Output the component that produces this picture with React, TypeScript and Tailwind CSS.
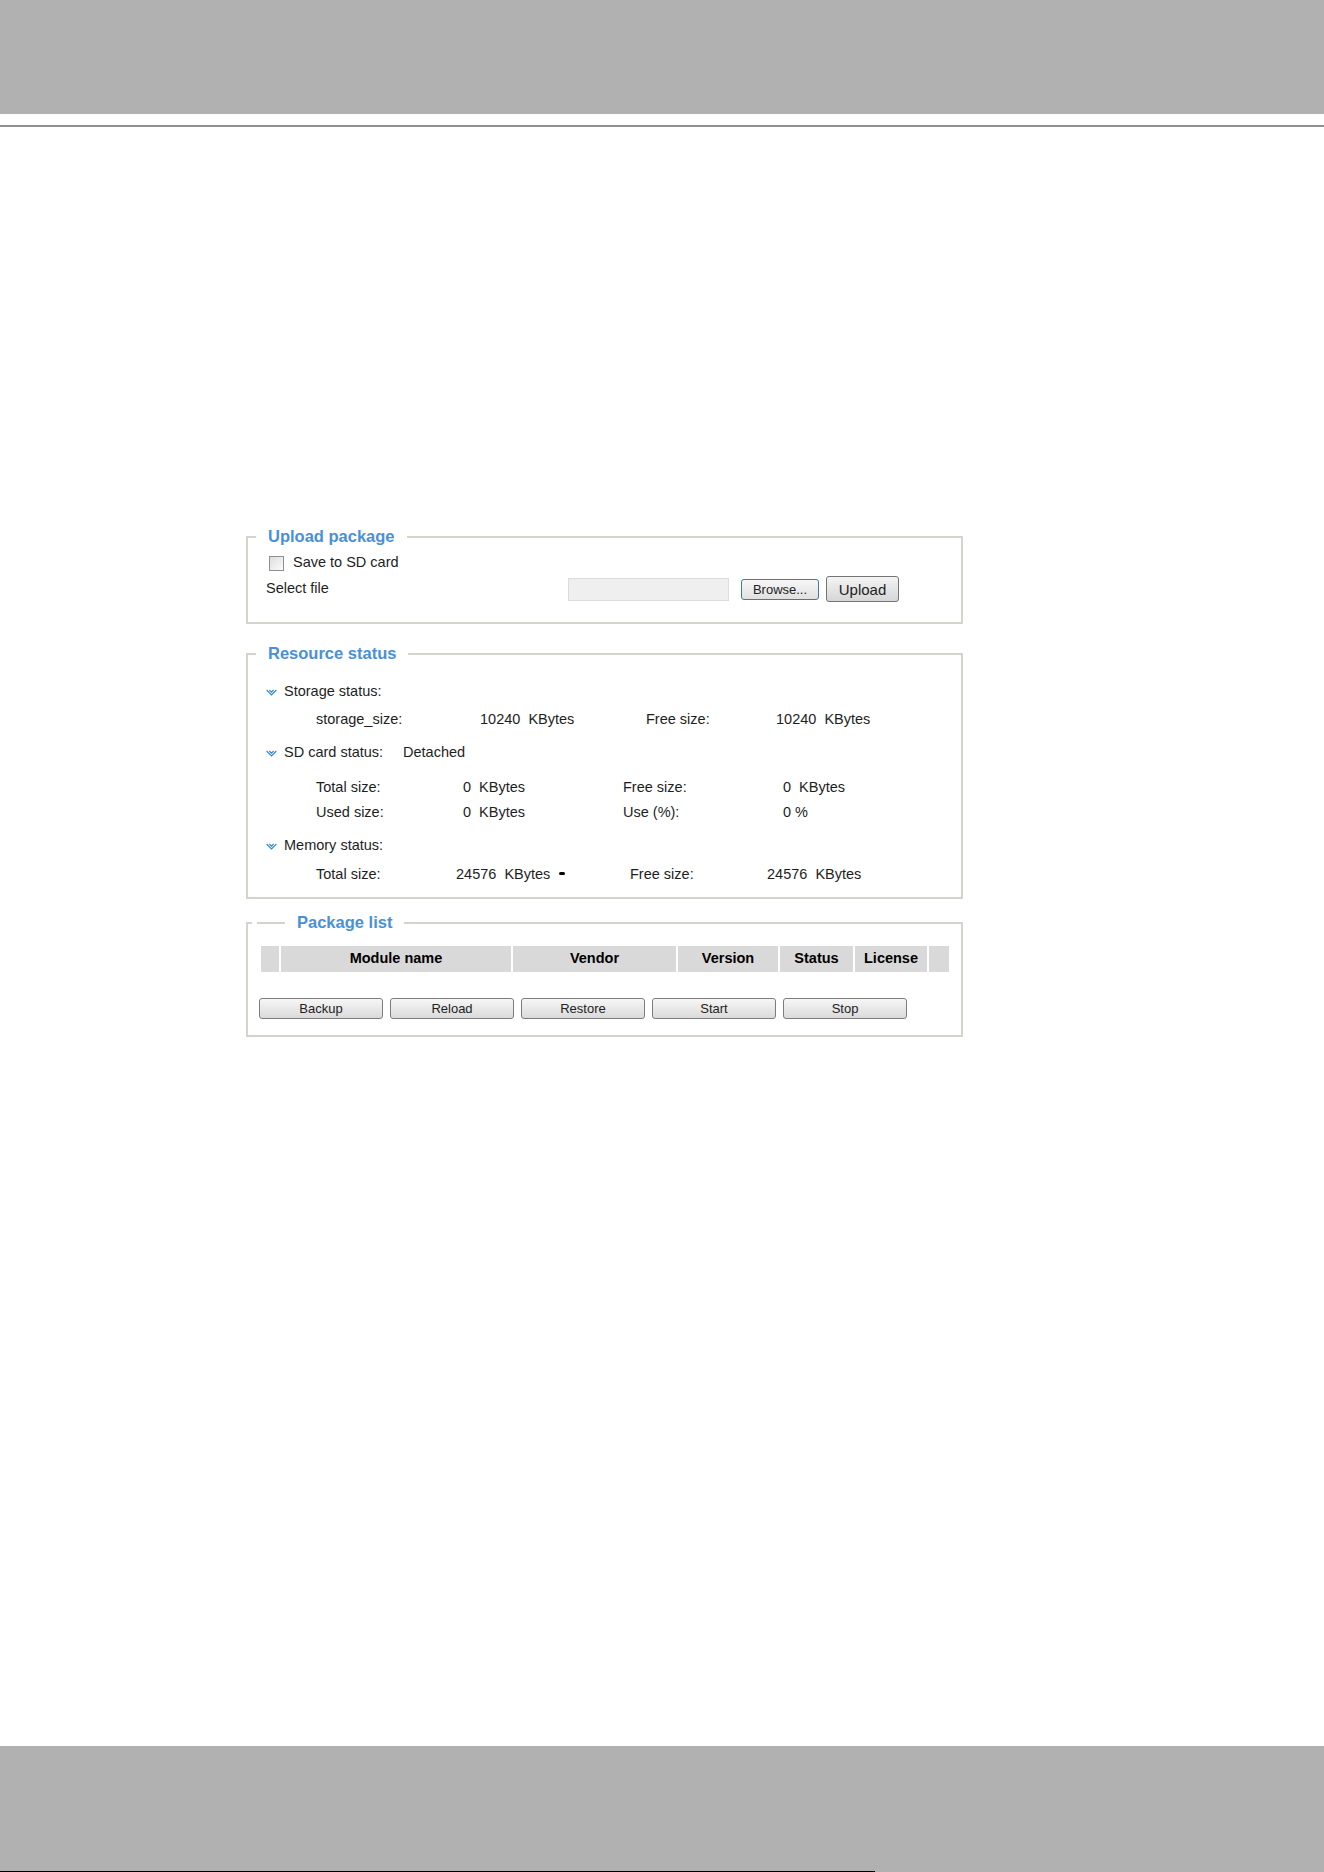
import React from 'react';

const FONT = "font-['Liberation_Sans',Arial,sans-serif]";

interface BoxProps {
  title: string;
  lead?: React.ReactNode;
  className?: string;
  children: React.ReactNode;
}

const Box: React.FC<BoxProps> = ({ title, lead, className = '', children }) => {
  return (
    <div className={`ml-[246px] w-[717px] ${className}`}>
      <div className="flex h-[20px] items-end">
        {lead ?? <div className="h-[10px] w-[10px] border-l-2 border-t-2 border-[#d6d3cb]" />}
        <span className="self-center px-[12px] text-[16.5px] font-bold leading-[20px] text-[#4a90d9]">{title}</span>
        <div className="h-[10px] flex-1 border-r-2 border-t-2 border-[#d6d3cb]" />
      </div>
      <div className="border-x-2 border-b-2 border-[#d6d3cb]">{children}</div>
    </div>
  );
};

const Arrow = () => (
  <svg width="11" height="7" viewBox="0 0 11 7" className="flex-none">
    <path d="M0.6 1 L5.5 6 L10.4 1" fill="none" stroke="#3385d6" strokeWidth="1.1" />
    <path d="M3.4 1 L5.5 3.2 L7.6 1" fill="none" stroke="#3385d6" strokeWidth="1.1" />
  </svg>
);

const Section = ({ label, extra }: { label: string; extra?: string }) => (
  <div className="flex h-[24px] items-center pl-[18px]">
    <Arrow />
    <span className="ml-[7px] w-[119px]">{label}</span>
    {extra && <span>{extra}</span>}
  </div>
);

const btn =
  'h-[21px] w-[124px] rounded-[3px] border border-[#7d7d7d] bg-gradient-to-b from-[#f7f7f7] to-[#dadada] text-[13px] leading-none text-[#222]';

export default function App() {
  return (
    <div className={`flex h-[1872px] w-full flex-col bg-white ${FONT} text-[14.5px] text-[#1e1e1e]`}>
      <div className="h-[114px] bg-[#b1b1b1]" />
      <div className="mt-[11px] h-[2px] bg-[#8f8f8f]" />

      <Box title="Upload package" className="mt-[399px]">
        <div className="pb-[20px] pt-[4px]">
          <div className="flex h-[26px] items-center pl-[21px]">
            <div className="h-[15px] w-[15px] border border-[#8e8e8e] bg-gradient-to-br from-[#dedede] to-[#fbfbfb]" />
            <span className="ml-[9px]">Save to SD card</span>
          </div>
          <div className="flex h-[26px] items-center pl-[18px]">
            <span className="w-[302px]">Select file</span>
            <div className="h-[23px] w-[161px] border border-[#dcdcdc] bg-[#efefef]" />
            <button className="ml-[12px] h-[21px] w-[78px] rounded-[3px] border border-[#3f7aab] bg-gradient-to-b from-[#f7f7f7] to-[#e0e0e0] text-[13px] leading-none text-[#222]">
              Browse...
            </button>
            <button className="ml-[7px] h-[26px] w-[73px] rounded-[3px] border border-[#747474] bg-gradient-to-b from-[#f4f4f4] to-[#d6d6d6] text-[15px] leading-none text-[#222]">
              Upload
            </button>
          </div>
        </div>
      </Box>

      <Box title="Resource status" className="mt-[19px]">
        <div className="whitespace-pre pb-[10px] pt-[17px]">
          <Section label="Storage status:" />
          <div className="mt-[4px] flex h-[24px] items-center pl-[68px]">
            <span className="w-[164px]">storage_size:</span>
            <span className="w-[166px]">10240  KBytes</span>
            <span className="w-[130px]">Free size:</span>
            <span>10240  KBytes</span>
          </div>
          <div className="mt-[9px]">
            <Section label="SD card status:" extra="Detached" />
          </div>
          <div className="mt-[11px] flex h-[24px] items-center pl-[68px]">
            <span className="w-[147px]">Total size:</span>
            <span className="w-[160px]">0  KBytes</span>
            <span className="w-[160px]">Free size:</span>
            <span>0  KBytes</span>
          </div>
          <div className="mt-[1px] flex h-[24px] items-center pl-[68px]">
            <span className="w-[147px]">Used size:</span>
            <span className="w-[160px]">0  KBytes</span>
            <span className="w-[160px]">Use (%):</span>
            <span>0 %</span>
          </div>
          <div className="mt-[9px]">
            <Section label="Memory status:" />
          </div>
          <div className="mt-[5px] flex h-[24px] items-center pl-[68px]">
            <span className="w-[140px]">Total size:</span>
            <span className="flex w-[174px] items-center">
              24576  KBytes
              <span className="mb-[4px] ml-[9px] inline-block h-[3px] w-[6px] rounded-full bg-black" />
            </span>
            <span className="w-[137px]">Free size:</span>
            <span>24576  KBytes</span>
          </div>
        </div>
      </Box>

      <Box
        title="Package list"
        className="mt-[13px]"
        lead={
          <>
            <div className="h-[10px] w-[6px] border-l-2 border-t-2 border-[#d6d3cb]" />
            <div className="w-[5px]" />
            <div className="h-[10px] w-[28px] border-t-2 border-[#d6d3cb]" />
          </>
        }
      >
        <div className="pb-[16px] pl-[13px] pt-[14px]">
          <div className="flex h-[26px] gap-[2px] text-[14.5px] font-bold text-black">
            <div className="w-[18px] bg-[#d9d9d9]" />
            <div className="flex w-[230px] items-center justify-center bg-[#d9d9d9]">Module name</div>
            <div className="flex w-[163px] items-center justify-center bg-[#d9d9d9]">Vendor</div>
            <div className="flex w-[100px] items-center justify-center bg-[#d9d9d9]">Version</div>
            <div className="flex w-[73px] items-center justify-center bg-[#d9d9d9]">Status</div>
            <div className="flex w-[72px] items-center justify-center bg-[#d9d9d9]">License</div>
            <div className="w-[20px] bg-[#d9d9d9]" />
          </div>
          <div className="ml-[-2px] mt-[26px] flex gap-[7px]">
            <button className={btn}>Backup</button>
            <button className={btn}>Reload</button>
            <button className={btn}>Restore</button>
            <button className={btn}>Start</button>
            <button className={btn}>Stop</button>
          </div>
        </div>
      </Box>

      <div className="mt-auto flex h-[126px] flex-col justify-end bg-[#b1b1b1]">
        <div className="h-[1px] w-[875px] bg-black" />
      </div>
    </div>
  );
}
